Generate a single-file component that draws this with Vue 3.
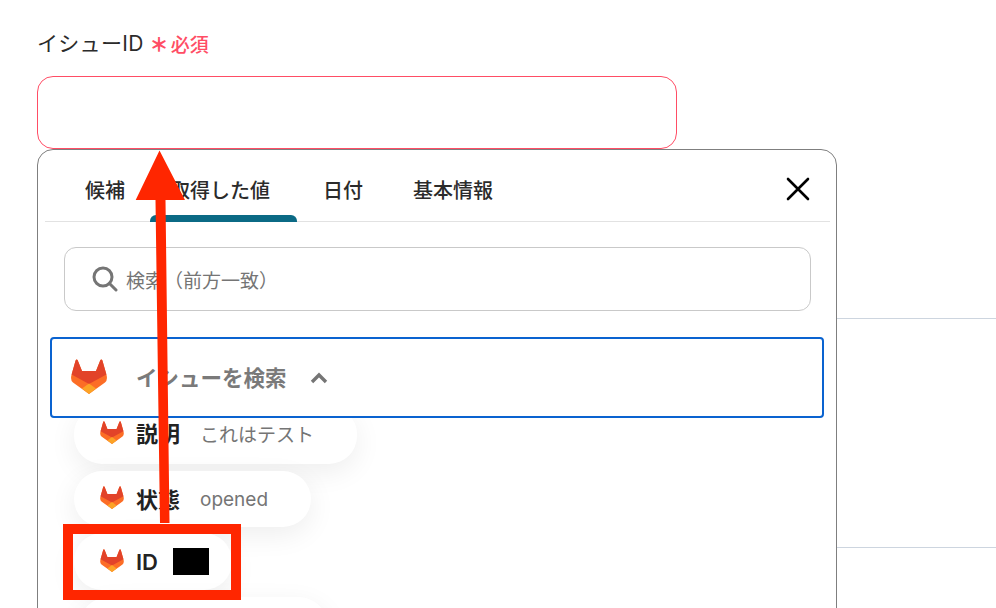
<script setup>
const tabs = [
  { label: '候補', width: 85 },
  { label: '取得した値', width: 153, active: true },
  { label: '日付', width: 90 },
  { label: '基本情報', width: 100 }
]
const pills = [
  { key: '説明', value: 'これはテスト', cls: 'p1', cjk: true },
  { key: '状態', value: 'opened', cls: 'p2', cjk: true },
  { key: 'ID', value: '', cls: 'p3', masked: true },
  { key: '', value: '', cls: 'p4' }
]
</script>

<template>
  <main class="page">
    <div class="label-row">
      <span class="label">イシューID</span>
      <span class="star">＊</span>
      <span class="req">必須</span>
    </div>
    <div class="input"></div>
    <div class="rule first"></div>
    <div class="rule second"></div>

    <section class="panel">
      <header class="tabbar">
        <div v-for="t in tabs" :key="t.label" class="tab" :class="{ active: t.active }" :style="{ width: t.width + 'px' }">{{ t.label }}</div>
        <svg class="close" width="24" height="24" viewBox="0 0 24 24"><path d="M2 2 L22 22 M22 2 L2 22" stroke="#000" stroke-width="2.600" stroke-linecap="round" fill="none"/></svg>
      </header>
      <div class="search">
        <svg width="26" height="26" viewBox="0 0 26 26"><circle cx="11" cy="11" r="9" fill="none" stroke="#757575" stroke-width="3"/><path d="M17.500 17.500 L24 24" stroke="#757575" stroke-width="3" stroke-linecap="round"/></svg>
        <span>検索（前方一致）</span>
      </div>
      <div class="group">
        <svg class="fox big" viewBox="0 0 36 35"><path fill="#fc6d26" d="M18 35 L2 23.500 Q-1 21 .6 15.500 L4.600 1.500 Q5.700 -.5 6.800 1.500 L11 12 H25 L29.200 1.500 Q30.300 -.5 31.400 1.500 L35.400 15.500 Q37 21 34 23.500 Z"/><path fill="#e24329" d="M18 25 L.6 15.500 L4.600 1.500 Q5.700 -.5 6.800 1.500 L11 12 H25 L29.200 1.500 Q30.300 -.5 31.400 1.500 L35.400 15.500 Z"/><path fill="#fca326" d="M18 35 L11 29.500 L18 24.500 L25 29.500 Z"/></svg>
        <span class="group-name">イシューを検索</span>
        <svg class="chev" width="18" height="12" viewBox="0 0 18 12"><path d="M2 10 L9 3 L16 10" fill="none" stroke="#757575" stroke-width="3.400"/></svg>
      </div>
      <div class="list">
        <div v-for="p in pills" :key="p.cls" class="pill" :class="p.cls">
          <template v-if="p.key">
            <svg class="fox" viewBox="0 0 36 35"><path fill="#fc6d26" d="M18 35 L2 23.500 Q-1 21 .6 15.500 L4.600 1.500 Q5.700 -.5 6.800 1.500 L11 12 H25 L29.200 1.500 Q30.300 -.5 31.400 1.500 L35.400 15.500 Q37 21 34 23.500 Z"/><path fill="#e24329" d="M18 25 L.6 15.500 L4.600 1.500 Q5.700 -.5 6.800 1.500 L11 12 H25 L29.200 1.500 Q30.300 -.5 31.400 1.500 L35.400 15.500 Z"/><path fill="#fca326" d="M18 35 L11 29.500 L18 24.500 L25 29.500 Z"/></svg>
            <span class="key" :class="{ cjk: p.cjk }">{{ p.key }}</span>
            <span v-if="p.masked" class="mask"></span>
            <span v-else class="val">{{ p.value }}</span>
          </template>
        </div>
      </div>
    </section>

    <div class="redbox"></div>
    <svg class="arrow" width="60" height="380" viewBox="0 0 60 380"><path fill="#ff2600" d="M24.500 .5 L50 50 H30.500 L34.500 373 H25 L20.500 50 H.7 Z"/></svg>
  </main>
</template>

<style>
html, body { margin: 0; background: #fff; }
</style>

<style scoped>
.page { position: relative; width: 996px; height: 608px; overflow: hidden; background: #fff; padding: 26px 0 0 37px; box-sizing: border-box; font-family: "Inter", "Noto Sans CJK JP", sans-serif; color: #2b2b2b; }
.label-row { display: flex; align-items: center; height: 32px; }
.label { font-size: 21px; letter-spacing: .3px; }
.star { color: #ff4d65; font-size: 19px; font-weight: 800; margin: 2px 0 0 6px; }
.req { color: #ff4d65; font-size: 19px; margin: 2px 0 0 2px; font-weight: 500; }
.input { width: 640px; height: 73px; margin-top: 18px; box-sizing: border-box; border: 1px solid #ff4d65; border-radius: 16px; }
.rule { height: 1px; background: #cdd5df; }
.rule.first { margin-top: 169px; }
.rule.second { margin-top: 228px; }
.panel { position: absolute; left: 37px; top: 149px; width: 800px; height: 480px; box-sizing: border-box; border: 1px solid #7f7f7f; border-radius: 16px; background: #fff; padding: 0 6px 0 7px; }
.tabbar { display: flex; height: 71px; padding-left: 40px; border-bottom: 1px solid #e2e2e2; align-items: stretch; position: relative; }
.tab { font-size: 20px; font-weight: 500; display: flex; align-items: center; padding-top: 7px; box-sizing: border-box; position: relative; color: #2b2b2b; }
.tab.active::after { content: ""; position: absolute; left: -20px; width: 147px; bottom: -1px; height: 7px; background: #0b6a85; border-radius: 6px 6px 0 0; }
.close { position: absolute; right: 20px; top: 27px; }
.search { display: flex; align-items: center; gap: 8px; margin: 25px 19px 0 19px; height: 64px; box-sizing: border-box; border: 1px solid #c9c9c9; border-radius: 12px; padding-left: 27px; font-size: 19px; color: #757575; }
.group { position: relative; z-index: 2; display: flex; align-items: center; margin: 26px 0 0 5px; width: 774px; height: 81px; box-sizing: border-box; border: 2px solid #0a63d0; border-radius: 4px; background: #fff; padding-left: 19px; }
.fox { width: 24px; height: 23px; flex: none; margin-top: -3px; }
.fox.big { width: 36px; height: 35px; margin-top: -3px; }
.group-name { font-size: 21.500px; font-weight: 600; color: #7a7a7a; margin: -3px 0 0 29px; }
.chev { margin-left: 23px; }
.list { display: flex; flex-direction: column; gap: 7px; margin: -12px 0 0 29px; position: relative; z-index: 1; }
.pill { height: 56px; box-sizing: border-box; border-radius: 28px; background: #fff; box-shadow: 0 8px 28px rgba(0,0,0,.07); display: flex; align-items: center; padding-left: 26px; }
.p1 { width: 283px; height: 58px; padding-bottom: 3px; }
.p2 { width: 237px; }
.p3 { width: 158px; height: 57px; margin-top: -1px; }
.p4 { width: 247px; margin-left: 6px; }
.key { font-size: 22px; font-weight: 600; margin-left: 12px; color: #222; }
.key.cjk { margin-top: -3px; }
.val { font-size: 19px; color: #757575; margin-left: 20px; }
.mask { width: 36px; height: 27px; background: #000; margin-left: 15px; }
.redbox { position: absolute; z-index: 5; left: 63px; top: 524px; width: 178px; height: 76px; box-sizing: border-box; border: 10px solid #ff2600; }
.arrow { position: absolute; z-index: 6; left: 135px; top: 150px; }
</style>
